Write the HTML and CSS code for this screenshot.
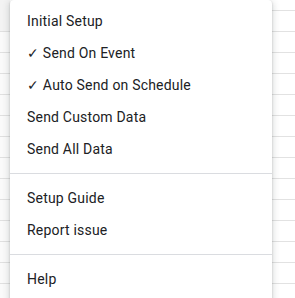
FILE: index.html
```html
<!DOCTYPE html>
<html>
<head>
<meta charset="utf-8">
<link rel="stylesheet" href="styles.css">
</head>
<body>
<div class="sheet">
  <div class="row-head"></div>
  <div class="cells"></div>
</div>
<div class="menu">
  <div class="item">Initial Setup</div>
  <div class="item">✓ Send On Event</div>
  <div class="item">✓ Auto Send on Schedule</div>
  <div class="item">Send Custom Data</div>
  <div class="item">Send All Data</div>
  <div class="sep"></div>
  <div class="item">Setup Guide</div>
  <div class="item">Report issue</div>
  <div class="sep"></div>
  <div class="item">Help</div>
</div>
</body>
</html>
```

FILE: styles.css
```css
html, body {
  margin: 0;
  padding: 0;
  width: 295px;
  height: 298px;
  overflow: hidden;
  background: #fff;
}
body {
  position: relative;
  font-family: Roboto, "Liberation Sans", sans-serif;
}
.sheet {
  display: flex;
  height: 298px;
}
.row-head {
  width: 10px;
  background:
    linear-gradient(to bottom, #f3f3f3 0 31px, transparent 31px),
    repeating-linear-gradient(to bottom, transparent 0 10px, #e0e0e0 10px 11px, transparent 11px 21px),
    #fafafa;
}
.cells {
  flex: 1;
  background:
    repeating-linear-gradient(to bottom, transparent 0 10px, #e2e2e2 10px 11px, transparent 11px 21px),
    #fff;
}
.menu {
  position: absolute;
  left: 10px;
  top: 0;
  width: 262px;
  padding: 5px 0 8px;
  background: #fff;
  border-radius: 4px;
  box-shadow: 0 2px 6px 2px rgba(60, 64, 67, 0.15), 0 1px 2px rgba(60, 64, 67, 0.3);
}
.item {
  height: 32px;
  line-height: 32px;
  padding-left: 17px;
  font-size: 14px;
  letter-spacing: 0.2px;
  color: #202124;
  white-space: nowrap;
}
.sep {
  height: 1px;
  margin: 8px 0;
  background: #dadce0;
}
```
